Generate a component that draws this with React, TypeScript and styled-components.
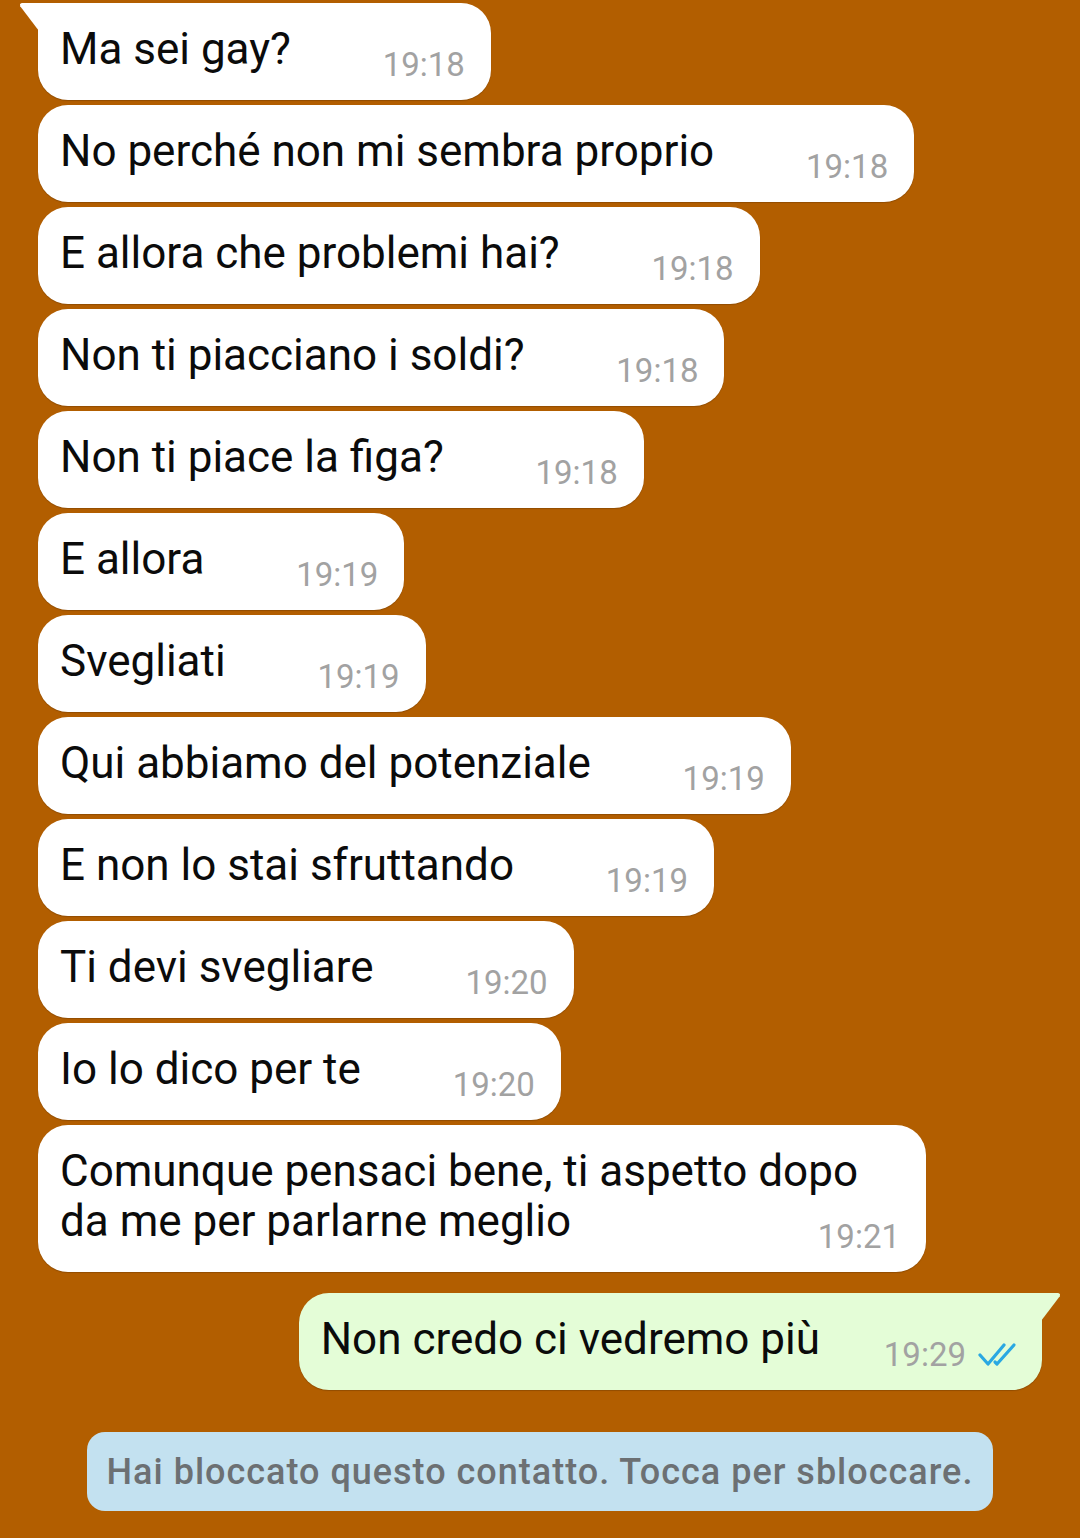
import styled, { createGlobalStyle } from "styled-components";

const GlobalStyle = createGlobalStyle`
  html, body {
    margin: 0;
    padding: 0;
    background: #b25e00;
  }
  body {
    font-family: Roboto, "Noto Sans", "Liberation Sans", sans-serif;
    -webkit-font-smoothing: antialiased;
  }
`;

interface Message {
  text: string[];
  time: string;
  out?: boolean;
}

const messages: Message[] = [
  { text: ["Ma sei gay?"], time: "19:18" },
  { text: ["No perché non mi sembra proprio"], time: "19:18" },
  { text: ["E allora che problemi hai?"], time: "19:18" },
  { text: ["Non ti piacciano i soldi?"], time: "19:18" },
  { text: ["Non ti piace la figa?"], time: "19:18" },
  { text: ["E allora"], time: "19:19" },
  { text: ["Svegliati"], time: "19:19" },
  { text: ["Qui abbiamo del potenziale"], time: "19:19" },
  { text: ["E non lo stai sfruttando"], time: "19:19" },
  { text: ["Ti devi svegliare"], time: "19:20" },
  { text: ["Io lo dico per te"], time: "19:20" },
  { text: ["Comunque pensaci bene, ti aspetto dopo", "da me per parlarne meglio"], time: "19:21" },
];

function DoubleCheck() {
  return (
    <svg width="40" height="26" viewBox="0 0 40 26" fill="none">
      <path d="M2 13 L10 22 L26 3" stroke="#2aa8e2" strokeWidth="3.2" strokeLinecap="round" strokeLinejoin="round" />
      <path d="M17 20 L19 22 L36 3" stroke="#2aa8e2" strokeWidth="3.2" strokeLinecap="round" strokeLinejoin="round" />
    </svg>
  );
}

function Bubble({ msg, tail }: { msg: Message; tail?: boolean }) {
  // wrapped text fills the full width of the bubble, like on the phone
  const wrapped = msg.text.length > 1;
  return (
    <BubbleBox $out={msg.out} $tail={tail} $wrapped={wrapped}>
      <Text>
        {msg.text.map((line, i) => (
          <span key={i}>
            {line}
            {i < msg.text.length - 1 && <br />}
          </span>
        ))}
        <Spacer $out={msg.out} />
      </Text>
      <Meta>
        <Time>{msg.time}</Time>
        {msg.out && <DoubleCheck />}
      </Meta>
    </BubbleBox>
  );
}

export default function App() {
  return (
    <>
      <GlobalStyle />
      <Chat>
        {messages.map((m, i) => (
          <Bubble key={i} msg={m} tail={i === 0} />
        ))}
        <Bubble msg={{ text: ["Non credo ci vedremo più"], time: "19:29", out: true }} tail />
        <Banner>Hai bloccato questo contatto. Tocca per sbloccare.</Banner>
      </Chat>
    </>
  );
}

const Chat = styled.div`
  width: 1080px;
  height: 1538px;
  box-sizing: border-box;
  padding: 3px 38px 0 38px;
  display: flex;
  flex-direction: column;
  align-items: flex-start;
  gap: 5px;
  overflow: hidden;
`;

const BubbleBox = styled.div<{ $out?: boolean; $tail?: boolean; $wrapped?: boolean }>`
  position: relative;
  display: grid;
  box-sizing: border-box;
  width: ${(p) => (p.$wrapped ? "888px" : "auto")};
  align-self: ${(p) => (p.$out ? "flex-end" : "flex-start")};
  margin-top: ${(p) => (p.$out ? "16px" : "0")};
  padding: 21px ${(p) => (p.$out ? "24px" : "26px")} 26px 22px;
  background: ${(p) => (p.$out ? "#e4fdd7" : "#ffffff")};
  border-radius: 30px;
  border-top-left-radius: ${(p) => (p.$tail && !p.$out ? "0" : "30px")};
  border-top-right-radius: ${(p) => (p.$tail && p.$out ? "0" : "30px")};
  box-shadow: 0 1px 1px rgba(0, 0, 0, 0.18);

  & > * {
    grid-area: 1 / 1;
  }

  &::before {
    content: "";
    display: ${(p) => (p.$tail ? "block" : "none")};
    position: absolute;
    top: 0;
    width: 20px;
    height: 28px;
    background: inherit;
    ${(p) =>
      p.$out
        ? `right: -19px; clip-path: polygon(0 0, 86% 0, 95% 4%, 94% 12%, 0 100%);`
        : `left: -19px; clip-path: polygon(100% 0, 14% 0, 5% 4%, 6% 12%, 100% 100%);`}
  }
`;

const Text = styled.div`
  font-size: 44px;
  line-height: 50px;
  color: #0b0b0b;
  white-space: nowrap;
`;

const Spacer = styled.span<{ $out?: boolean }>`
  display: inline-block;
  width: ${(p) => (p.$out ? "198px" : "174px")};
  height: 1px;
`;

const Meta = styled.div`
  justify-self: end;
  align-self: end;
  display: flex;
  align-items: center;
  gap: 12px;
  margin-bottom: -7px;
`;

const Time = styled.span`
  font-size: 33px;
  line-height: 33px;
  color: #a2a2a2;
`;

const Banner = styled.div`
  align-self: center;
  margin-top: 37px;
  padding: 0 20px;
  height: 79px;
  display: flex;
  align-items: center;
  justify-content: center;
  background: #c3e1f0;
  border-radius: 18px;
  color: #6c7073;
  font-size: 36px;
  font-weight: 500;
  letter-spacing: 1px;
  white-space: nowrap;
`;
